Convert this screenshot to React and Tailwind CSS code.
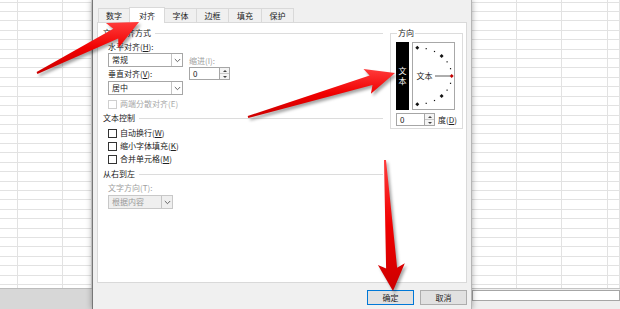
import React from 'react';

const FONT = "font-['Noto_Sans_CJK_SC','Noto_Sans',sans-serif]";

// polygon for a tapering arrow: thin tail, wider shaft, notched head
function arrowPoints(x1, y1, x2, y2, tailW, shaftW, headW, headL) {
  const dx = x2 - x1, dy = y2 - y1, L = Math.hypot(dx, dy);
  const ux = dx / L, uy = dy / L, px = -uy, py = ux;
  const bx = x2 - ux * headL, by = y2 - uy * headL;
  const jx = bx + ux * 4, jy = by + uy * 4;
  const p = (x, y, s) => `${(x + px * s).toFixed(1)},${(y + py * s).toFixed(1)}`;
  return [
    p(x1, y1, tailW / 2), p(jx, jy, shaftW / 2), p(bx, by, headW / 2), `${x2},${y2}`,
    p(bx, by, -headW / 2), p(jx, jy, -shaftW / 2), p(x1, y1, -tailW / 2),
  ].join(' ');
}

const ARROWS = [
  arrowPoints(37, 73, 139, 22, 2, 11, 28, 30),
  arrowPoints(248, 117, 395, 73, 2, 10, 26, 29),
  arrowPoints(385, 160, 393, 291, 2, 11, 27, 27),
];

function Sheet({ cols }) {
  return (
    <div className="h-[288px] overflow-hidden bg-white">
      {Array.from({ length: 32 }).map((_, r) => (
        <div key={r} className={`flex border-b border-[#e2e2e2] ${r === 0 ? 'h-[2.5px]' : 'h-[9.43px]'}`}>
          {cols.map((w, i) => (
            <div key={i} className={`h-full border-r border-[#e2e2e2] ${w ? '' : 'flex-1'}`} style={w ? { width: w } : undefined} />
          ))}
        </div>
      ))}
    </div>
  );
}

function Chevron() {
  return (
    <svg width="7" height="5" viewBox="0 0 7 5">
      <path d="M0.8 1 L3.5 3.7 L6.2 1" fill="none" stroke="#555" strokeWidth="0.9" />
    </svg>
  );
}

function Select({ value, width, disabled }) {
  return (
    <div
      className={`flex h-[14px] border ${disabled ? 'border-[#c8c8c8] bg-[#efefef] text-[#9a9a9a]' : 'border-[#a6a6a6] bg-white text-[#222]'}`}
      style={{ width }}
    >
      <div className="flex-1 pl-[3px] leading-[12px]">{value}</div>
      <div className="w-[11px] flex items-center justify-center border-l border-[#c4c4c4]">
        <Chevron />
      </div>
    </div>
  );
}

function Spin({ width }) {
  return (
    <div className="flex h-[13px]">
      <div className="border border-[#a6a6a6] bg-white pl-[3px] leading-[11px] text-[#222]" style={{ width }}>0</div>
      <div className="w-[10px] flex flex-col border border-l-0 border-[#a6a6a6] bg-[#f4f4f4]">
        <div className="flex-1 flex items-center justify-center border-b border-[#c8c8c8]">
          <div className="w-0 h-0 border-l-[2px] border-r-[2px] border-b-[2px] border-l-transparent border-r-transparent border-b-[#444]" />
        </div>
        <div className="flex-1 flex items-center justify-center">
          <div className="w-0 h-0 border-l-[2px] border-r-[2px] border-t-[2px] border-l-transparent border-r-transparent border-t-[#444]" />
        </div>
      </div>
    </div>
  );
}

function Check({ label, disabled, className = '' }) {
  return (
    <div className={`flex items-center h-[10px] pl-[5px] ${className}`}>
      <div className={`w-[9px] h-[9px] border bg-white ${disabled ? 'border-[#cfcfcf]' : 'border-[#333]'}`} />
      <span className={`ml-[3px] leading-[10px] ${disabled ? 'text-[#a8a8a8]' : 'text-[#222]'}`}>{label}</span>
    </div>
  );
}

function GroupHeader({ label, className = '' }) {
  return (
    <div className={`flex items-center h-[10px] ${className}`}>
      <span className="leading-[10px] text-[#222]">{label}</span>
      <div className="flex-1 ml-[4px] border-t border-[#dcdcdc]" />
    </div>
  );
}

const TABS = [
  ['数字', 32], ['对齐', 36], ['字体', 33], ['边框', 33], ['填充', 34], ['保护', 33],
];

function Orientation() {
  const dots = [];
  for (let a = -90; a <= 90; a += 15) {
    const t = (a * Math.PI) / 180;
    const x = 4.3 + 34.4 * Math.cos(t);
    const y = 33 + 28.3 * Math.sin(t);
    const big = a % 45 === 0;
    dots.push(
      <rect
        key={a}
        x={x - (big ? 1.4 : 0.6)}
        y={y - (big ? 1.4 : 0.6)}
        width={big ? 2.8 : 1.2}
        height={big ? 2.8 : 1.2}
        fill={a === 0 ? '#c00000' : '#111'}
        transform={big ? `rotate(45 ${x} ${y})` : undefined}
      />
    );
  }
  return (
    <div className="w-[43px] h-[68px] border border-[#a8a8a8] bg-white">
      <svg width="41" height="66" viewBox="0 0 41 66">
        {dots}
        <text x="3.5" y="36" fontSize="8" fill="#222" fontFamily="Noto Sans CJK SC, sans-serif">文本</text>
        <line x1="22" y1="33" x2="37" y2="33" stroke="#333" strokeWidth="0.8" />
      </svg>
    </div>
  );
}

export default function App() {
  return (
    <div className={`relative w-[620px] h-[309px] overflow-hidden bg-white text-[8px] ${FONT}`}>
      <div className="flex h-full">
        {/* left sheet */}
        <div className="w-[92px] flex flex-col">
          <Sheet cols={[18, 45, 0]} />
          <div className="flex-1 bg-[#d7d7d7] border-t border-[#bcbcbc]" />
        </div>

        {/* dialog */}
        <div className="relative z-10 w-[380px] flex flex-col bg-[#f0f0f0] border-l border-r border-l-[#777] border-r-[#b5b5b5] shadow-[0_0_6px_rgba(0,0,0,0.35)]">
          <div className="h-[22px] flex items-end ml-[5px]">
            {TABS.map(([t, w], i) => (
              <div
                key={t}
                className={`flex items-center justify-center border border-b-0 border-[#d9d9d9] ${i ? '-ml-px' : ''} ${i === 1 ? 'relative z-10 h-[16px] -mb-px bg-white' : 'h-[14px] bg-[#f0f0f0]'} text-[#222]`}
                style={{ width: w }}
              >
                {t}
              </div>
            ))}
          </div>

          <div className="ml-[4px] mr-[4px] h-[261px] border border-[#d9d9d9] bg-white flex pl-[5px] pr-[3px]">
            {/* left column */}
            <div className="w-[280px] flex flex-col">
              <GroupHeader label="文本对齐方式" className="mt-[5px]" />
              <div className="flex pl-[5px] mt-[4px]">
                <div className="flex flex-col">
                  <div className="h-[10px] leading-[10px] text-[#222]">水平对齐(<u>H</u>):</div>
                  <div className="mt-[1px]"><Select value="常规" width={75} /></div>
                  <div className="h-[10px] leading-[10px] text-[#222] mt-[2px]">垂直对齐(<u>V</u>):</div>
                  <div className="mt-[2px]"><Select value="居中" width={75} /></div>
                </div>
                <div className="flex flex-col ml-[6px]">
                  <div className="h-[10px] leading-[10px] text-[#a0a0a0] mt-[14px]">缩进(I):</div>
                  <div className="mt-[1px]"><Spin width={31} /></div>
                </div>
              </div>
              <Check label="两端分散对齐(E)" disabled className="mt-[4px]" />
              <GroupHeader label="文本控制" className="mt-[4px]" />
              <Check label={<>自动换行(<u>W</u>)</>} className="mt-[5px]" />
              <Check label={<>缩小字体填充(<u>K</u>)</>} className="mt-[3px]" />
              <Check label={<>合并单元格(<u>M</u>)</>} className="mt-[3px]" />
              <GroupHeader label="从右到左" className="mt-[5px]" />
              <div className="pl-[5px] mt-[4px] h-[10px] leading-[10px] text-[#a0a0a0]">文字方向(T):</div>
              <div className="pl-[5px] mt-[2px]"><Select value="根据内容" width={65} disabled /></div>
            </div>

            {/* orientation group */}
            <fieldset className="ml-auto mt-[5px] self-start w-[73px] border border-[#dcdcdc] pl-[5px] pb-[2px]">
              <legend className="ml-[1px] px-[1px] leading-[10px] text-[#222]">方向</legend>
              <div className="flex mt-[4px]">
                <div className="w-[13px] h-[68px] bg-black text-white flex flex-col items-center justify-center leading-[10px]">
                  <span>文</span>
                  <span>本</span>
                </div>
                <div className="ml-[3px]"><Orientation /></div>
              </div>
              <div className="flex items-center mt-[3px]">
                <Spin width={29} />
                <span className="ml-[3px] text-[#222]">度(<u>D</u>)</span>
              </div>
            </fieldset>
          </div>

          <div className="flex-1 flex justify-end items-start pt-[7px] pr-[4px] gap-[6px]">
            <button className="w-[47px] h-[15px] border border-[#0078d7] bg-[#e1e1e1] text-[#222] leading-[13px]">确定</button>
            <button className="w-[47px] h-[15px] border border-[#adadad] bg-[#e1e1e1] text-[#222] leading-[13px]">取消</button>
          </div>
        </div>

        {/* right sheet */}
        <div className="flex-1 flex flex-col">
          <Sheet cols={[45, 45, 46, 0]} />
          <div className="flex-1 bg-[#efefef] border-t border-[#c4c4c4] pt-[1px]">
            <div className="h-[11px] border border-[#a6a6a6] bg-white" />
          </div>
        </div>
      </div>

      {/* red annotation arrows */}
      <svg className="absolute inset-0 z-20 pointer-events-none" width="620" height="309">
        <defs>
          <linearGradient id="red" x1="0" y1="0" x2="0" y2="1">
            <stop offset="0" stopColor="#ff3b3b" />
            <stop offset="0.5" stopColor="#f00000" />
            <stop offset="1" stopColor="#cc0000" />
          </linearGradient>
          <filter id="blur" x="-20%" y="-20%" width="140%" height="140%">
            <feGaussianBlur stdDeviation="1.4" />
          </filter>
        </defs>
        {ARROWS.map((pts, i) => (
          <g key={i}>
            <polygon points={pts} fill="rgba(0,0,0,0.35)" filter="url(#blur)" transform="translate(2 2.5)" />
            <polygon points={pts} fill="url(#red)" />
          </g>
        ))}
      </svg>
    </div>
  );
}
